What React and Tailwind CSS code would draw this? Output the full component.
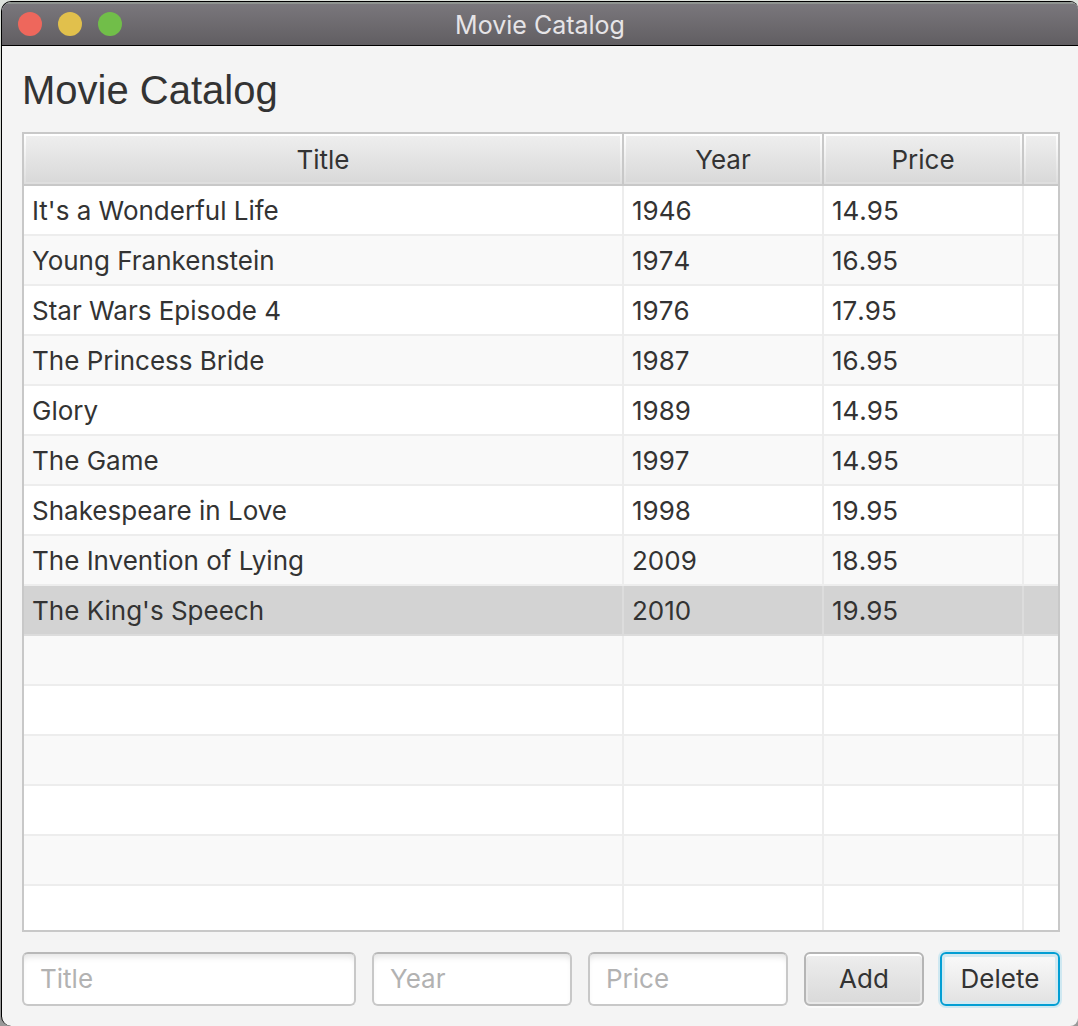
const movies = [
  ["It's a Wonderful Life", "1946", "14.95"],
  ["Young Frankenstein", "1974", "16.95"],
  ["Star Wars Episode 4", "1976", "17.95"],
  ["The Princess Bride", "1987", "16.95"],
  ["Glory", "1989", "14.95"],
  ["The Game", "1997", "14.95"],
  ["Shakespeare in Love", "1998", "19.95"],
  ["The Invention of Lying", "2009", "18.95"],
  ["The King's Speech", "2010", "19.95"],
];

const rows = [...movies, ...Array.from({ length: 6 }, () => ["", "", ""])];
const selectedIndex = 8;

function HeaderCell({ children, last }) {
  return (
    <th
      scope="col"
      className={`h-[52px] border-b-2 border-[#c8c8c8] p-0 font-normal ${last ? "" : "border-r-2"}`}
    >
      <div className="h-[50px] bg-linear-to-b from-white to-[#dedede] p-0.5">
        <div className="flex h-full items-center justify-center bg-linear-to-b from-[#eeeeee] to-[#d9d9d9] pt-0.5">
          {children}
        </div>
      </div>
    </th>
  );
}

function MovieRow({ cells, index }) {
  const selected = index === selectedIndex;
  const fill = selected ? "bg-[#d3d3d3]" : index % 2 ? "bg-[#f9f9f9]" : "bg-white";
  const line = selected ? "border-[#dcdcdc]" : "border-[#ededed]";
  return (
    <tr className={fill} aria-selected={selected}>
      {cells.map((cell, i) => (
        <td
          key={i}
          className={`h-[50px] truncate border-r-2 border-b-2 px-2 pt-0.5 pb-0 ${i > 0 ? "[font-kerning:none]" : ""} ${line}`}
        >
          {cell}
        </td>
      ))}
      <td className={`h-[50px] border-b-2 p-0 ${line}`} />
    </tr>
  );
}

function Field({ label, className }) {
  return (
    <input
      type="text"
      aria-label={label}
      placeholder={label}
      className={`h-[54px] min-w-0 rounded-md border-2 border-[#c8c8c8] border-t-[#b8b8b8] bg-white px-4 pb-0.5 shadow-[inset_0_6px_6px_-3px_#e4e4e4] outline-none placeholder:text-[#b2b2b2] ${className}`}
    />
  );
}

export default function App() {
  return (
    <div className="h-screen bg-linear-to-b from-[#dfe3dd] to-[#999999] pt-px pl-px font-['Inter',sans-serif] text-[26px] leading-9 text-[#333333]">
      <div className="flex h-full flex-col overflow-hidden rounded-l-[10px] rounded-r-lg border-t border-l border-black bg-[#f4f4f4]">
        <header className="flex h-11 shrink-0 items-center border-t-2 border-b border-t-[#8f9490] border-b-black bg-linear-to-b from-[#7a777c] to-[#615e62] px-4">
          <div className="flex flex-1 gap-4 pb-0.5">
            <button type="button" aria-label="Close" className="size-6 rounded-full bg-[#ee675c]" />
            <button type="button" aria-label="Minimize" className="size-6 rounded-full bg-[#e1c04c]" />
            <button type="button" aria-label="Zoom" className="size-6 rounded-full bg-[#71be49]" />
          </div>
          <span className="text-[25px] text-[#e6e4e7]">Movie Catalog</span>
          <div className="flex-1" />
        </header>

        <main className="flex min-h-0 flex-1 flex-col gap-5 pt-5 pr-[18px] pb-5 pl-5">
          <h1 className="pt-0.5 font-['Liberation_Sans',sans-serif] text-[40px] leading-11">Movie Catalog</h1>

          <div className="min-h-0 flex-1 overflow-hidden border-2 border-[#c8c8c8] bg-white">
            <table className="w-full table-fixed border-separate border-spacing-0 text-left">
              <colgroup>
                <col />
                <col className="w-[200px]" />
                <col className="w-[200px]" />
                <col className="w-[34px]" />
              </colgroup>
              <thead>
                <tr>
                  <HeaderCell>Title</HeaderCell>
                  <HeaderCell>Year</HeaderCell>
                  <HeaderCell>Price</HeaderCell>
                  <HeaderCell last />
                </tr>
              </thead>
              <tbody>
                {rows.map((cells, i) => (
                  <MovieRow key={i} cells={cells} index={i} />
                ))}
              </tbody>
            </table>
          </div>

          <form className="flex gap-4" onSubmit={(e) => e.preventDefault()}>
            <Field label="Title" className="flex-1" />
            <Field label="Year" className="w-[200px]" />
            <Field label="Price" className="w-[200px]" />
            <button
              type="submit"
              className="h-[54px] w-[120px] rounded-md border-2 border-[#b5b5b5] bg-linear-to-b from-[#eeeeee] to-[#d9d9d9] shadow-[inset_0_2px_0_#ffffff,inset_0_0_0_2px_#e8e8e8,0_2px_0_#fafafa]"
            >
              Add
            </button>
            <button
              type="button"
              className="h-[54px] w-[120px] rounded-md border-2 border-[#039ed3] bg-linear-to-b from-[#fafafa] to-[#e2e2e2] shadow-[inset_0_0_0_3px_#d3e9f1,0_0_0_2px_#cfe8f1]"
            >
              Delete
            </button>
          </form>
        </main>
      </div>
    </div>
  );
}
